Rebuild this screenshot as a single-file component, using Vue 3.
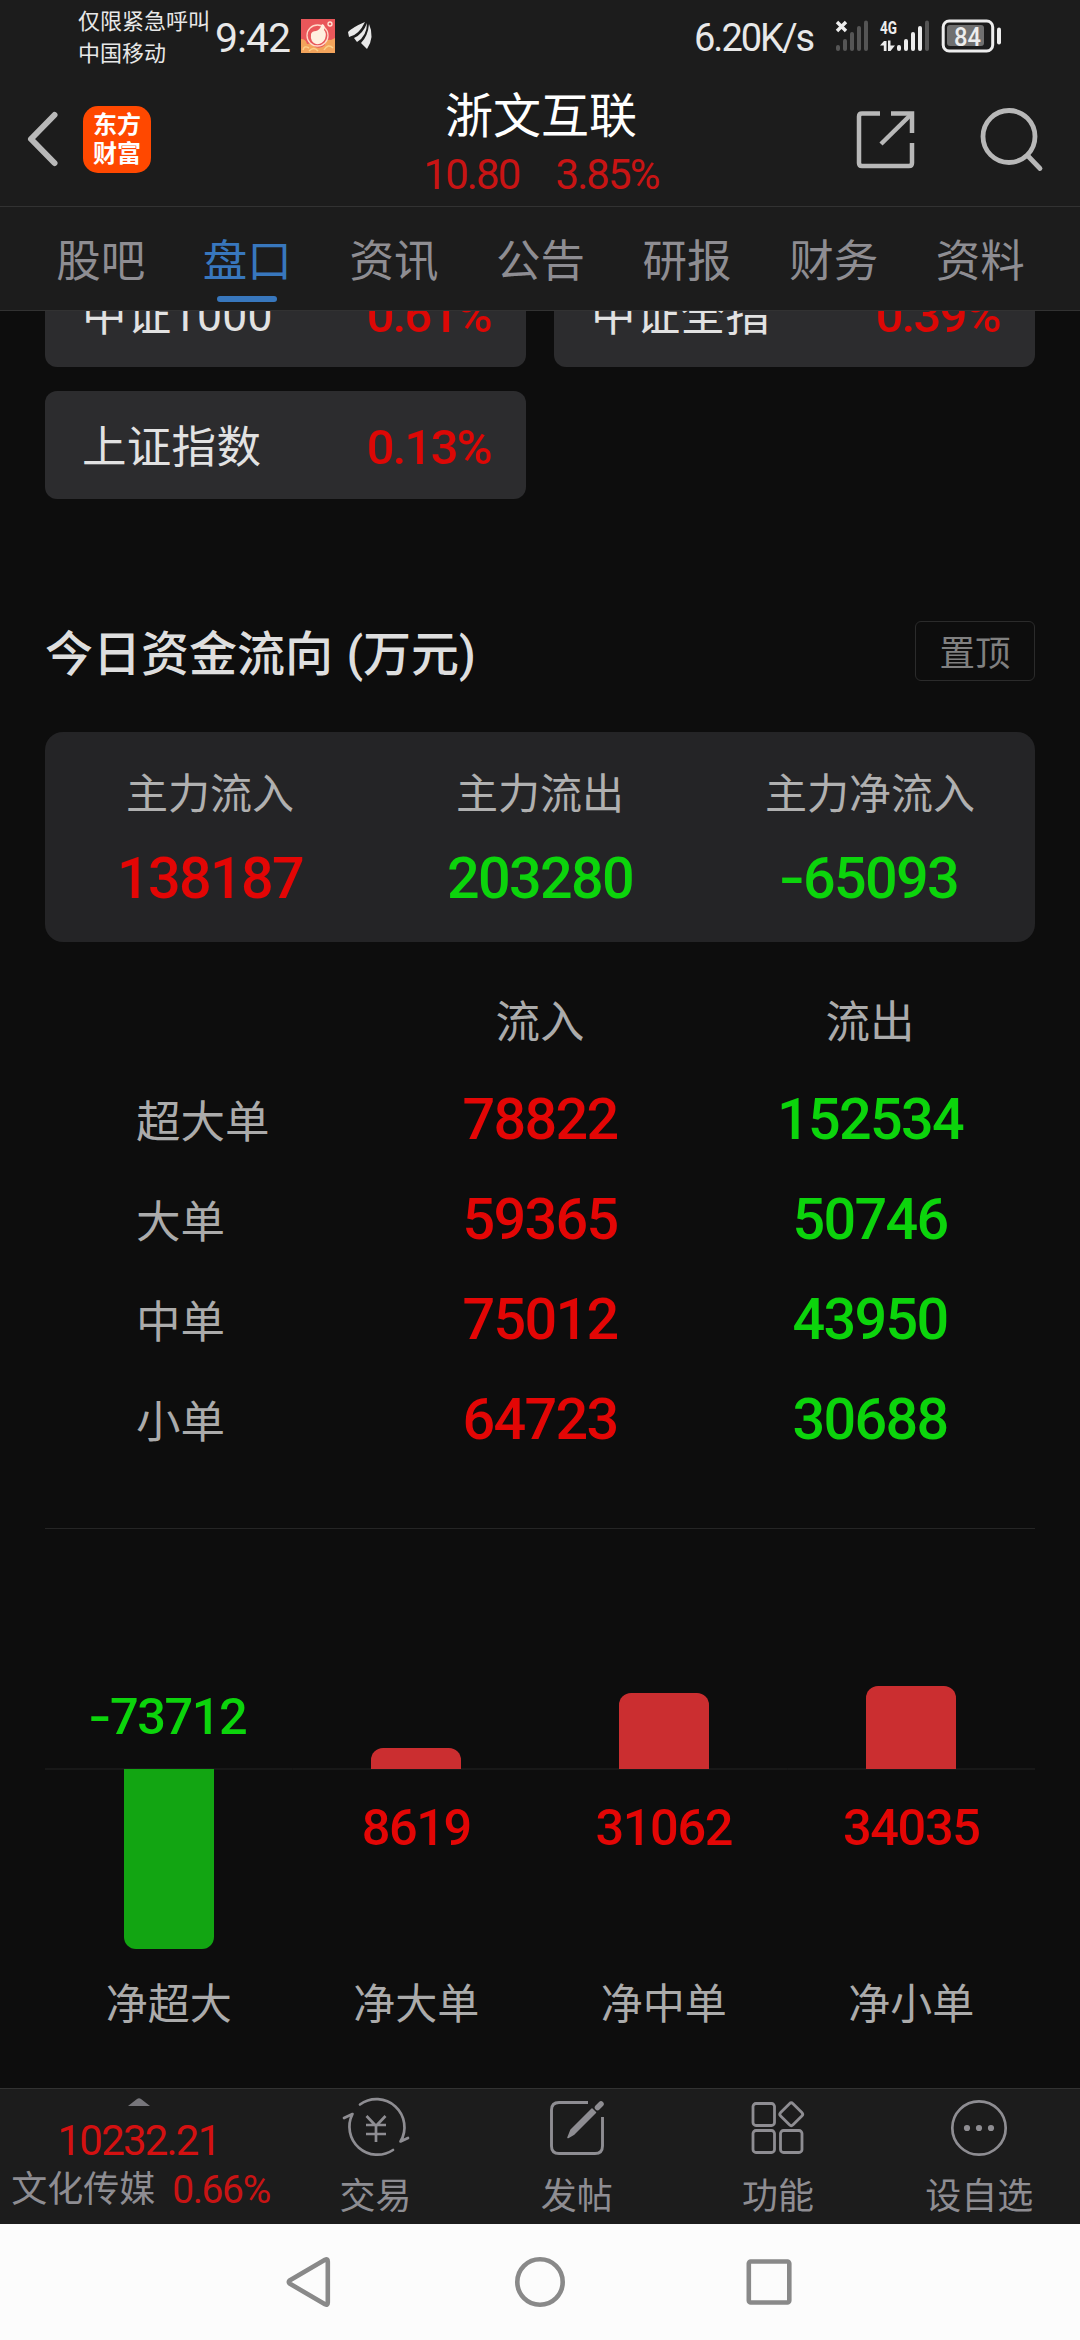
<script setup>
const tabs = ['股吧', '盘口', '资讯', '公告', '研报', '财务', '资料']
const activeTab = '盘口'

const indices = [
  { name: '中证1000', change: '0.61%' },
  { name: '中证全指', change: '0.39%' },
  { name: '上证指数', change: '0.13%' },
]

const summary = [
  { label: '主力流入', sign: '', value: '138187', tone: 'up' },
  { label: '主力流出', sign: '', value: '203280', tone: 'down' },
  { label: '主力净流入', sign: '-', value: '65093', tone: 'down' },
]

const orders = [
  { name: '超大单', inflow: '78822', outflow: '152534' },
  { name: '大单', inflow: '59365', outflow: '50746' },
  { name: '中单', inflow: '75012', outflow: '43950' },
  { name: '小单', inflow: '64723', outflow: '30688' },
]

// Bar lengths are in px on either side of the zero line.
const nets = [
  { name: '净超大', sign: '-', value: '73712', length: 180, down: true },
  { name: '净大单', sign: '', value: '8619', length: 21, down: false },
  { name: '净中单', sign: '', value: '31062', length: 76, down: false },
  { name: '净小单', sign: '', value: '34035', length: 83, down: false },
]
</script>

<template>
  <div class="screen">
    <header class="status">
      <div class="carrier">
        <span>仅限紧急呼叫</span>
        <span>中国移动</span>
      </div>
      <span class="clock">9:42</span>
      <svg class="notice" viewBox="0 0 34 34" width="34" height="34">
        <rect width="34" height="34" fill="#e9575a" />
        <path d="M0 20Q5 20 6 25Q12 23 14 28Q20 30 24 26Q24 20 30 21L34 19V34H0Z" fill="#f3a45c" />
        <circle cx="16.500" cy="16.500" r="10.500" fill="none" stroke="#ffd9c8" stroke-width="1.300" />
        <path d="M10 15Q11 12 15 12Q19 11 21 5Q25 6 23 11Q26 14 24 20Q21 26 15 25Q9 23 10 15Z" fill="#fff0df" />
        <circle cx="29" cy="5" r="2" fill="none" stroke="#ffe6d6" stroke-width="1.300" />
        <path d="M2 31Q3 26 8 29M8 32Q13 27 17 32M23 31Q27 24 32 29" fill="none" stroke="#fbd08a" stroke-width="1.500" />
      </svg>
      <svg class="wing" viewBox="0 0 25 28" width="25" height="28">
        <path d="M17 0Q5 5 0 10L1 15Q11 13 17 0Z" fill="#e8e8e8" />
        <path d="M19 1Q15 12 6 16L9 20Q19 14 19 1Z" fill="#e8e8e8" />
        <path d="M21 2Q20 14 13 21L19 27Q27 15 21 2Z" fill="#e8e8e8" />
      </svg>
      <span class="speed">6.20K/s</span>
      <svg class="signals" viewBox="0 0 167 34" width="167" height="34">
        <g stroke="#ededed" stroke-width="3.400">
          <path d="M2 3L11 12M11 3L2 12" />
        </g>
        <g fill="#555">
          <rect x="1" y="26" width="4" height="6" rx="2" />
          <rect x="8" y="20" width="4" height="12" rx="2" />
          <rect x="15" y="13" width="4" height="19" rx="2" />
          <rect x="22" y="7" width="4" height="25" rx="2" />
          <rect x="29" y="1.500" width="4" height="30.500" rx="2" />
          <rect x="90" y="1.500" width="4" height="30.500" rx="2" />
        </g>
        <text class="net" x="45" y="15" textLength="17" lengthAdjust="spacingAndGlyphs">4G</text>
        <g fill="#ededed">
          <path d="M45 26.500L49 22H51.500V32H48.800V26.500Z" />
          <path d="M53 21.500H55.500V26.500H60L55.500 32H53Z" />
          <rect x="62" y="26" width="4" height="6" rx="2" />
          <rect x="69" y="20" width="4" height="12" rx="2" />
          <rect x="76" y="13" width="4" height="19" rx="2" />
          <rect x="83" y="7" width="4" height="25" rx="2" />
          <rect x="162" y="8.500" width="4" height="17" rx="2" />
        </g>
        <rect x="108.200" y="2" width="49.500" height="30" rx="6" fill="none" stroke="#ededed" stroke-width="3" />
        <rect x="112" y="6" width="37" height="21" rx="3" fill="#707070" />
        <text class="level" x="119" y="26.500" textLength="27" lengthAdjust="spacingAndGlyphs">84</text>
      </svg>
    </header>

    <div class="titlebar">
      <svg class="back" viewBox="0 0 32 58" width="32" height="58">
        <path d="M28.500 5L5 29L28.500 53" fill="none" stroke="#b8b8b8" stroke-width="6" stroke-linecap="round" stroke-linejoin="round" />
      </svg>
      <div class="logo"><span>东方</span><span>财富</span></div>
      <div class="stock">
        <h1>浙文互联</h1>
        <p><span>10.80</span><span>3.85%</span></p>
      </div>
      <svg class="share" viewBox="0 0 60 60" width="60" height="60" fill="none" stroke="#b8b8b8" stroke-width="4.500">
        <path d="M27 4.500H9Q6 4.500 6 7.500V54Q6 57 9 57H56Q59 57 59 54V34" />
        <path d="M38 4.500H59V24" />
        <path d="M59 4.500L28 35" />
      </svg>
      <svg class="search" viewBox="0 0 66 68" width="66" height="68" fill="none" stroke="#b8b8b8" stroke-width="4.800">
        <circle cx="30" cy="30.500" r="26" />
        <path d="M49 50L61 62.500" stroke-linecap="round" />
      </svg>
    </div>

    <nav class="tabs">
      <span v-for="tab in tabs" :key="tab" class="tab" :class="{ active: tab === activeTab }">{{ tab }}</span>
    </nav>

    <main class="content">
      <section class="indices">
        <div v-for="item in indices" :key="item.name" class="index">
          <span>{{ item.name }}</span>
          <b>{{ item.change }}</b>
        </div>
      </section>

      <section class="flow">
        <div class="heading">
          <h2>今日资金流向 (万元)</h2>
          <span class="pin">置顶</span>
        </div>

        <div class="summary">
          <div v-for="item in summary" :key="item.label" class="total">
            <span class="label">{{ item.label }}</span>
            <span class="num" :class="item.tone"><i v-if="item.sign">{{ item.sign }}</i>{{ item.value }}</span>
          </div>
        </div>

        <div class="orders">
          <div class="row head"><span></span><span>流入</span><span>流出</span></div>
          <div v-for="order in orders" :key="order.name" class="row">
            <span class="name">{{ order.name }}</span>
            <span class="num up">{{ order.inflow }}</span>
            <span class="num down">{{ order.outflow }}</span>
          </div>
        </div>
      </section>

      <section class="chart">
        <div v-for="net in nets" :key="net.name" class="column" :class="{ negative: net.down }">
          <div class="above">
            <span v-if="net.down" class="num down"><i>{{ net.sign }}</i>{{ net.value }}</span>
            <div v-else class="bar" :style="{ height: net.length + 'px' }"></div>
          </div>
          <div class="below">
            <div v-if="net.down" class="bar" :style="{ height: net.length + 'px' }"></div>
            <span v-else class="num up">{{ net.value }}</span>
          </div>
          <span class="caption">{{ net.name }}</span>
        </div>
      </section>
    </main>

    <footer class="toolbar">
      <div class="sector">
        <svg viewBox="0 0 22 8" width="22" height="8"><path d="M0 8L9 1Q11 -.5 13 1L22 8Z" fill="#77767b" /></svg>
        <span class="quote">10232.21</span>
        <div class="change"><span>文化传媒</span><b>0.66%</b></div>
      </div>
      <div class="action">
        <svg viewBox="0 0 68 60" width="68" height="60" fill="none" stroke="#8e8d92" stroke-width="2.700" stroke-linecap="round" stroke-linejoin="round">
          <path d="M18 6.500A28 28 0 0 1 58.500 43.500L66 40" />
          <path d="M51 52A28 28 0 0 1 10.500 16L2 20" />
          <path d="M24.500 18L34 28L43.500 18M34 28V44M24 27H44M24 36H44" stroke-linecap="butt" />
        </svg>
        <span>交易</span>
      </div>
      <div class="action">
        <svg viewBox="0 0 60 60" width="60" height="60" fill="none" stroke="#8e8d92" stroke-width="2.900">
          <path d="M41 4.500H12Q4.500 4.500 4.500 12V48Q4.500 55.500 12 55.500H48Q55.500 55.500 55.500 48V19" />
          <path d="M45 11L48.500 14.500L27 36L21 39.500L24 32Z" fill="#8e8d92" stroke-width="1.500" stroke-linejoin="round" />
          <path d="M50.500 9.500L54 6" stroke-width="5.500" stroke-linecap="round" />
        </svg>
        <span>发帖</span>
      </div>
      <div class="action">
        <svg viewBox="0 0 60 60" width="60" height="60" fill="none" stroke="#8e8d92" stroke-width="2.800">
          <rect x="5" y="5.500" width="21.500" height="22" rx="3" />
          <rect x="5" y="32.500" width="21.500" height="22" rx="3" />
          <rect x="32.500" y="32.500" width="21.500" height="22" rx="3" />
          <rect x="34.500" y="7.500" width="17.500" height="17.500" rx="2.500" transform="rotate(45 43.250 16.250)" />
        </svg>
        <span>功能</span>
      </div>
      <div class="action">
        <svg viewBox="0 0 60 60" width="60" height="60">
          <circle cx="30" cy="30" r="26.700" fill="none" stroke="#8e8d92" stroke-width="2.700" />
          <g fill="#8e8d92"><circle cx="18" cy="30" r="3.100" /><circle cx="30" cy="30" r="3.100" /><circle cx="42" cy="30" r="3.100" /></g>
        </svg>
        <span>设自选</span>
      </div>
    </footer>

    <div class="sysnav">
      <svg viewBox="0 0 560 60" width="560" height="60" fill="none" stroke="#898989" stroke-width="4.600" stroke-linejoin="round">
        <path d="M65 7.800Q67.800 6.500 67.800 9.500V50.500Q67.800 53.500 65 52.200L30 31.800Q27.500 30 30 28.200Z" />
        <circle cx="280" cy="30" r="22.700" />
        <rect x="488.800" y="9.500" width="40.500" height="41" rx="2" />
      </svg>
    </div>
  </div>
</template>

<style>
body {
  margin: 0;
  background: #0d0d0d;
}
</style>

<style scoped>
* {
  box-sizing: border-box;
}
.screen {
  display: flex;
  flex-direction: column;
  width: 1080px;
  height: 2340px;
  overflow: hidden;
  background: #0d0d0d;
  font-family: Roboto, "Noto Sans CJK SC", sans-serif;
  white-space: nowrap;
}
svg {
  display: block;
  flex: none;
  overflow: visible;
}
h1, h2, p {
  margin: 0;
}
b, i {
  font-weight: inherit;
  font-style: normal;
}

.status {
  flex: none;
  display: flex;
  align-items: flex-start;
  height: 80px;
  padding-left: 78px;
  background: #1c1c1c;
  color: #e8e8e8;
}
.carrier {
  display: flex;
  flex-direction: column;
  width: 137px;
  padding-top: 6px;
  font-size: 22px;
  line-height: 32px;
}
.clock {
  width: 86px;
  margin-top: 18px;
  font-size: 41px;
  font-weight: 400;
  line-height: 40px;
  letter-spacing: -1px;
}
.notice {
  margin-top: 19px;
}
.wing {
  margin: 22px 0 0 13px;
}
.speed {
  width: 141px;
  margin: 18px 0 0 321px;
  font-size: 38px;
  line-height: 41px;
  letter-spacing: -2px;
}
.signals {
  margin-top: 19px;
}
.net {
  font: 700 18px Roboto, sans-serif;
  fill: #ededed;
}
.level {
  font: 500 26px Roboto, sans-serif;
  fill: #ededed;
}

.titlebar {
  flex: none;
  display: flex;
  align-items: flex-start;
  height: 127px;
  padding: 0 35px 0 26px;
  background: #1c1c1c;
  border-bottom: 1px solid #323232;
}
.back {
  margin-top: 30px;
}
.logo {
  display: flex;
  flex-direction: column;
  align-items: center;
  width: 68px;
  height: 67px;
  margin: 26px 0 0 25px;
  padding-top: 5px;
  border-radius: 15px;
  background: #ff4800;
  color: #fff;
  font-size: 24px;
  font-weight: 700;
  line-height: 29px;
}
.stock {
  flex: 1;
  display: flex;
  flex-direction: column;
  align-items: center;
  padding: 7px 0 0 78px;
}
.stock h1 {
  color: #fff;
  font-size: 48px;
  font-weight: 400;
  line-height: 60px;
}
.stock p {
  display: flex;
  gap: 36px;
  margin-top: 8px;
  color: #c81414;
  font-size: 42px;
  line-height: 40px;
  letter-spacing: -1.9px;
}
.share {
  margin: 29px 66px 0 0;
}
.search {
  margin-top: 26px;
}

.tabs {
  flex: none;
  display: flex;
  height: 104px;
  padding: 0 27px;
  background: #1c1c1c;
  border-bottom: 1px solid #323232;
}
.tab {
  flex: 1;
  display: flex;
  flex-direction: column;
  align-items: center;
  padding: 25px 0 0 1px;
  color: #8e8d92;
  font-size: 44.5px;
  line-height: 60px;
}
.tab.active {
  color: #3877bd;
}
.tab.active::after {
  content: "";
  width: 60px;
  height: 6px;
  margin-top: 4px;
  border-radius: 3px;
  background: #3877bd;
}

.content {
  flex: 1;
  min-height: 0;
  overflow: hidden;
  padding: 0 45px;
}
.indices {
  display: grid;
  grid-template-columns: 481px 481px;
  justify-content: space-between;
  gap: 24px 0;
  margin-top: -52px;
}
.index {
  display: flex;
  align-items: center;
  justify-content: space-between;
  height: 108px;
  padding: 6px 35px 0 37px;
  border-radius: 12px;
  background: #2c2c2e;
  color: #e2e2e2;
  font-size: 44.5px;
  line-height: 60px;
  letter-spacing: 0.3px;
}
.index b {
  color: #dc0806;
  font-size: 49px;
  font-weight: 500;
  letter-spacing: -1.8px;
}

.heading {
  display: flex;
  align-items: center;
  justify-content: space-between;
  height: 60px;
  margin-top: 122px;
}
.heading h2 {
  padding-top: 8px;
  color: #dedede;
  font-size: 48px;
  font-weight: 500;
  line-height: 60px;
  word-spacing: 1.5px;
}
.pin {
  width: 120px;
  height: 60px;
  border: 1px solid #2b2b2b;
  border-radius: 6px;
  color: #808080;
  font-size: 35.5px;
  line-height: 64px;
  text-align: center;
}

.summary {
  display: grid;
  grid-template-columns: repeat(3, 1fr);
  height: 210px;
  margin-top: 51px;
  border-radius: 18px;
  background: #242426;
}
.total {
  display: flex;
  flex-direction: column;
  align-items: center;
  padding-top: 33px;
}
.label {
  color: #b0b0b0;
  font-size: 42px;
  line-height: 60px;
}
.num {
  font-size: 57.5px;
  font-weight: 500;
  line-height: 60px;
  letter-spacing: -1.7px;
}
.num i {
  display: inline-block;
  margin-right: 3px;
  transform: scaleX(1.3);
}
.total .num {
  margin-top: 24px;
}
.up {
  color: #e30605;
}
.down {
  color: #0cd40c;
}

.orders {
  display: flex;
  flex-direction: column;
  padding-top: 32px;
}
.row {
  display: grid;
  grid-template-columns: repeat(3, 1fr);
  align-items: center;
  height: 100px;
  color: #ababab;
  font-size: 44.5px;
  line-height: 60px;
  text-align: center;
}
.row.head {
  height: 96px;
  padding-top: 2px;
}
.row .name {
  padding: 6px 0 0 91px;
  text-align: left;
}

.chart {
  display: grid;
  grid-template-columns: repeat(4, 1fr);
  margin-top: 58px;
  border-top: 1px solid #252525;
}
.column {
  display: flex;
  flex-direction: column;
  align-items: center;
}
.above {
  align-self: stretch;
  display: flex;
  flex-direction: column;
  align-items: center;
  justify-content: flex-end;
  height: 240px;
  background: linear-gradient(#181818, #181818) bottom / 100% 1px no-repeat;
}
.below {
  align-self: stretch;
  display: flex;
  flex-direction: column;
  align-items: center;
  height: 205px;
  background: linear-gradient(#181818, #181818) top / 100% 1px no-repeat;
}
.bar {
  width: 90px;
  border-radius: 12px 12px 0 0;
  background: #cb2e30;
}
.negative .bar {
  border-radius: 0 0 12px 12px;
  background: #12a512;
}
.chart .num {
  font-size: 50.5px;
  letter-spacing: -1.4px;
}
.above .num {
  margin-bottom: 22px;
}
.below .num {
  margin-top: 29px;
}
.caption {
  color: #ababab;
  font-size: 42px;
  line-height: 62px;
}

.toolbar {
  flex: none;
  display: flex;
  height: 136px;
  background: #1c1c1c;
  border-top: 1px solid #323232;
  color: #8e8d92;
  font-size: 36px;
  line-height: 44px;
}
.sector {
  display: flex;
  flex-direction: column;
  align-items: center;
  width: 275px;
  padding: 9px 0 0 2px;
}
.quote {
  margin-top: 12px;
  color: #d41111;
  font-size: 42px;
  line-height: 46px;
  letter-spacing: -1.8px;
}
.change {
  display: flex;
  gap: 17px;
  margin-top: 4px;
  padding-left: 4px;
}
.change b {
  color: #c81414;
  font-size: 39px;
  letter-spacing: -1.4px;
}
.action {
  flex: 1;
  display: flex;
  flex-direction: column;
  align-items: center;
  padding-top: 9px;
}
.action span {
  margin-top: 17px;
}

.sysnav {
  flex: none;
  display: flex;
  justify-content: center;
  height: 116px;
  padding-top: 28px;
  background: #fcfcfc;
}
</style>
